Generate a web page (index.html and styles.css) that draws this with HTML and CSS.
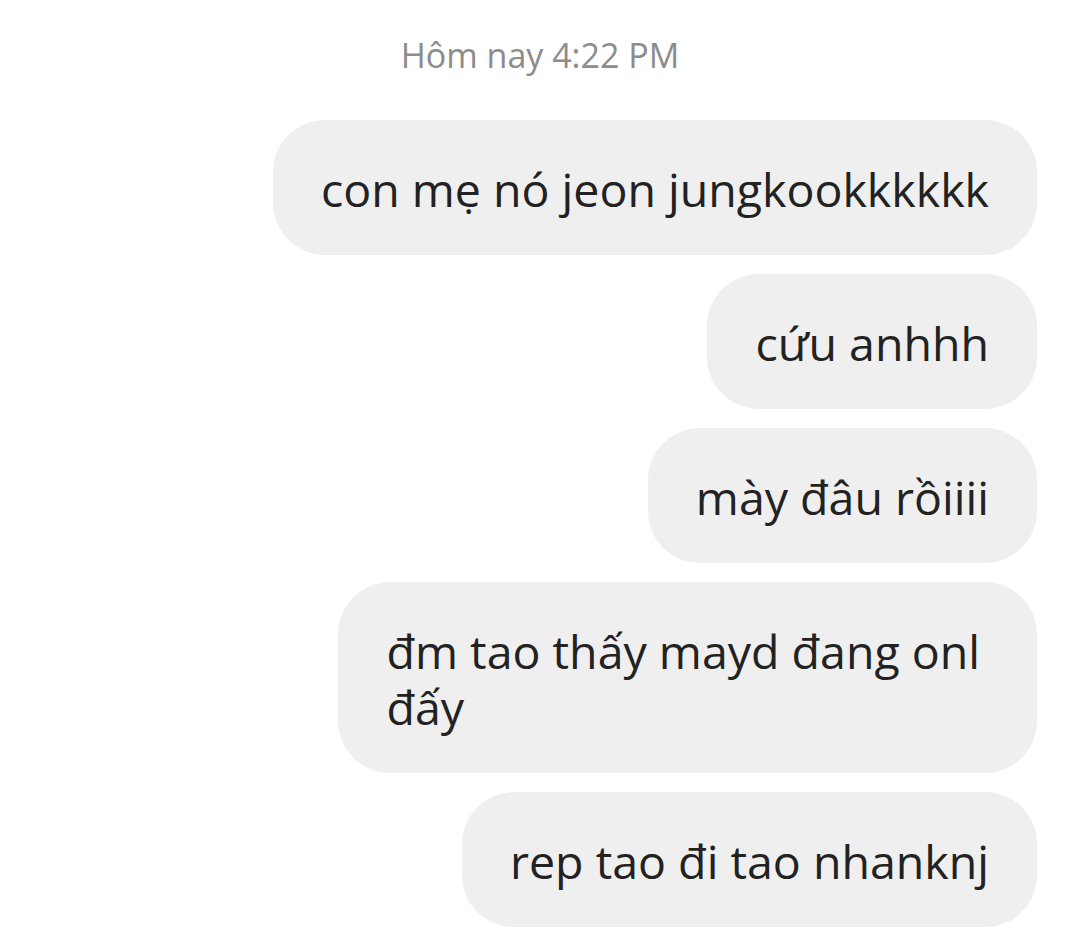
FILE: index.html
```html
<!DOCTYPE html>
<html lang="vi">
<head>
<meta charset="utf-8">
<link rel="stylesheet" href="styles.css">
</head>
<body>
<div class="chat">
  <div class="stamp">Hôm nay 4:22 PM</div>
  <div class="list">
    <div class="bubble">con mẹ nó jeon jungkookkkkkk</div>
    <div class="bubble">cứu anhhh</div>
    <div class="bubble">mày đâu rồiiii</div>
    <div class="bubble bubble-wrapped">đm tao thấy mayd đang onl<br>đấy</div>
    <div class="bubble">rep tao đi tao nhanknj</div>
  </div>
</div>
</body>
</html>
```
FILE: styles.css
```css
html, body {
  margin: 0;
  padding: 0;
  background: #ffffff;
}
.chat {
  width: 1080px;
  height: 939px;
  overflow: hidden;
  font-family: "Open Sans", "Noto Sans", sans-serif;
}
.stamp {
  text-align: center;
  color: #8c8c8c;
  font-size: 34px;
  line-height: 46px;
  padding-top: 32px;
  height: 86px;
  box-sizing: border-box;
}
.list {
  display: flex;
  flex-direction: column;
  align-items: flex-end;
  gap: 19px;
  padding: 34px 43px 0 0;
}
.bubble {
  background: #efefef;
  color: #222222;
  font-size: 46.5px;
  line-height: 56px;
  padding: 41px 48px 38px 48px;
  border-radius: 52px;
}
.bubble-wrapped {
  padding-right: 57px;
}
```
